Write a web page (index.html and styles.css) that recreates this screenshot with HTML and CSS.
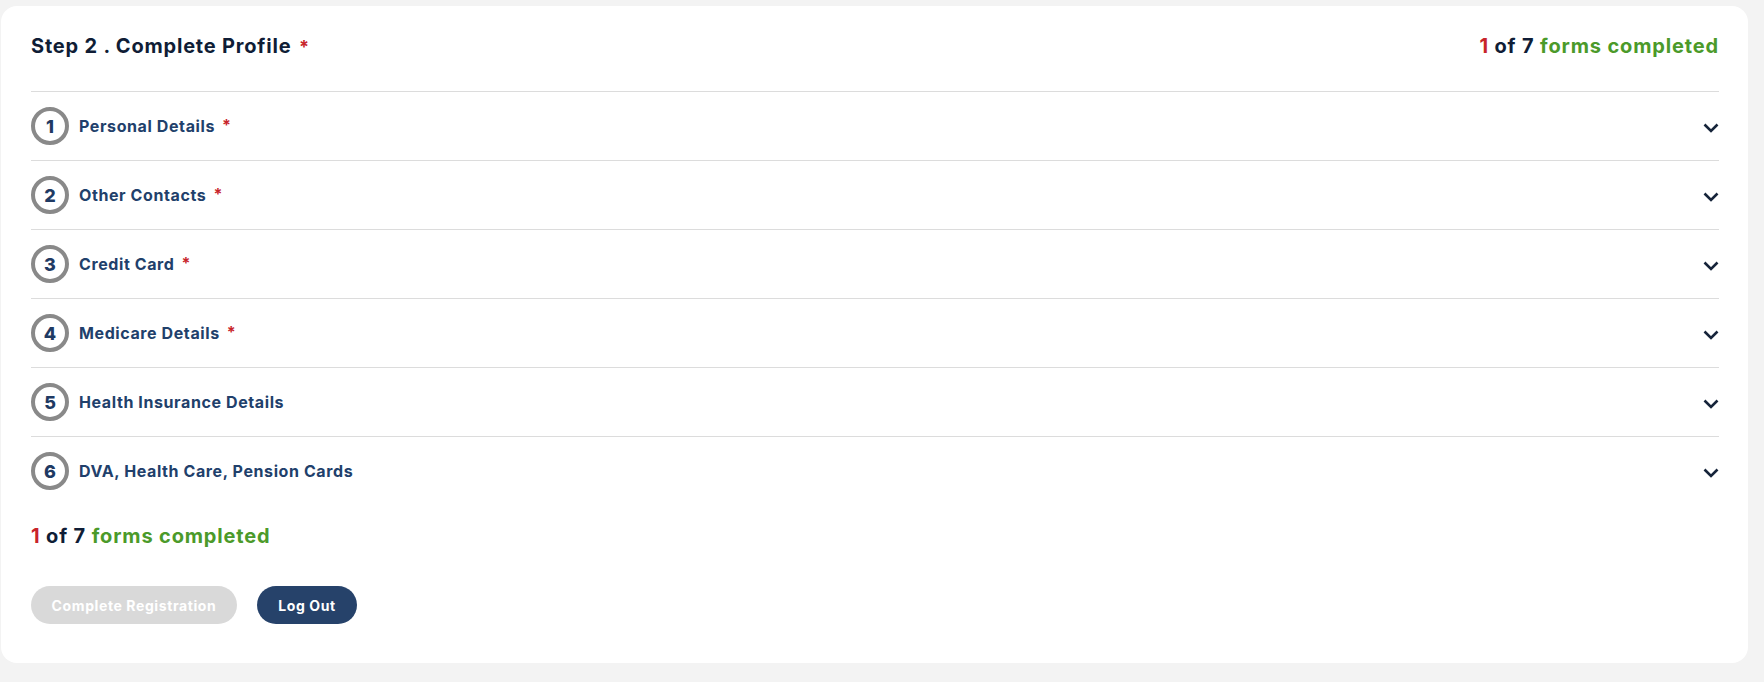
FILE: index.html
```html
<!DOCTYPE html>
<html lang="en">
<head>
    <meta charset="UTF-8">
    <meta name="viewport" content="width=device-width, initial-scale=1.0">
    <title>Complete Profile</title>
    <link rel="stylesheet" href="styles.css">
</head>
<body>
    <div class="card">
        <!-- header -->
        <div class="head">
            <h2 class="title">Step 2 . Complete Profile <span class="req">*</span></h2>
            <div class="progress"><span class="count">1</span> of 7 <span class="done">forms completed</span></div>
        </div>
        <!-- form list -->
        <ul class="forms">
            <li class="form-row">
                <span class="step">1</span>
                <span class="label">Personal Details</span><span class="req">*</span>
                <svg class="chev" viewBox="0 0 16 10"><path d="M1.5 1.5 L8 8 L14.5 1.5"/></svg>
            </li>
            <li class="form-row">
                <span class="step">2</span>
                <span class="label">Other Contacts</span><span class="req">*</span>
                <svg class="chev" viewBox="0 0 16 10"><path d="M1.5 1.5 L8 8 L14.5 1.5"/></svg>
            </li>
            <li class="form-row">
                <span class="step">3</span>
                <span class="label">Credit Card</span><span class="req">*</span>
                <svg class="chev" viewBox="0 0 16 10"><path d="M1.5 1.5 L8 8 L14.5 1.5"/></svg>
            </li>
            <li class="form-row">
                <span class="step">4</span>
                <span class="label">Medicare Details</span><span class="req">*</span>
                <svg class="chev" viewBox="0 0 16 10"><path d="M1.5 1.5 L8 8 L14.5 1.5"/></svg>
            </li>
            <li class="form-row">
                <span class="step">5</span>
                <span class="label">Health Insurance Details</span>
                <svg class="chev" viewBox="0 0 16 10"><path d="M1.5 1.5 L8 8 L14.5 1.5"/></svg>
            </li>
            <li class="form-row">
                <span class="step">6</span>
                <span class="label">DVA, Health Care, Pension Cards</span>
                <svg class="chev" viewBox="0 0 16 10"><path d="M1.5 1.5 L8 8 L14.5 1.5"/></svg>
            </li>
        </ul>
        <div class="progress bottom"><span class="count">1</span> of 7 <span class="done">forms completed</span></div>
        <div class="actions">
            <button class="btn btn-off" disabled>Complete Registration</button>
            <button class="btn btn-main">Log Out</button>
        </div>
    </div>
</body>
</html>
```

FILE: styles.css
```css
*{
    margin: 0;
    padding: 0;
    box-sizing: border-box;
}
body{
    background-color: #f3f3f3;
    padding: 6px 16px 19px 1px;
    font-family: "Inter", "Noto Sans", sans-serif;
    font-weight: 700;
}
.card{
    background-color: #fff;
    border-radius: 16px;
    padding: 28px 29px 39px 30px;
}
.head{
    display: flex;
    justify-content: space-between;
    align-items: center;
    height: 57px;
    padding-bottom: 33px;
}
.title{
    font-size: 20px;
    line-height: 24px;
    letter-spacing: 0.8px;
    color: #0f1d36;
    font-weight: 700;
}
.title .req{
    font-size: 18px;
    margin-left: 2px;
}
.req{
    color: #c8242a;
    font-size: 16px;
    line-height: 1;
}
.progress{
    font-size: 20px;
    line-height: 24px;
    letter-spacing: 0.85px;
    color: #0f1d36;
}
.progress .count{
    color: #c8242a;
}
.progress .done{
    color: #4b9a2a;
}
.forms{
    list-style: none;
    border-top: 1px solid #dcdcdc;
}
.form-row{
    display: flex;
    align-items: center;
    height: 69px;
    border-bottom: 1px solid #dcdcdc;
}
.form-row:last-child{
    border-bottom: none;
    height: 68px;
}
.step{
    width: 38px;
    height: 38px;
    border: 4px solid #898989;
    border-radius: 50%;
    display: flex;
    align-items: center;
    justify-content: center;
    font-size: 18px;
    font-weight: 800;
    color: #1f3a63;
}
.label{
    margin-left: 10px;
    font-size: 16px;
    letter-spacing: 0.6px;
    color: #21406b;
}
.form-row .req{
    margin-left: 7px;
    margin-top: -3px;
}
.chev{
    margin-left: auto;
    width: 16px;
    height: 10px;
    margin-top: 3px;
    fill: none;
    stroke: #16243a;
    stroke-width: 2.6;
}
.bottom{
    margin-top: 19px;
}
.actions{
    display: flex;
    gap: 20px;
    margin-top: 38px;
}
.btn{
    height: 38px;
    border: none;
    border-radius: 19px;
    font-family: inherit;
    font-weight: 700;
    font-size: 14px;
    letter-spacing: 0.6px;
    color: #fff;
    padding: 0;
}
.btn-off{
    background-color: #d9d9d9;
    width: 206px;
}
.btn-main{
    background-color: #26426a;
    width: 100px;
    cursor: pointer;
}
```
